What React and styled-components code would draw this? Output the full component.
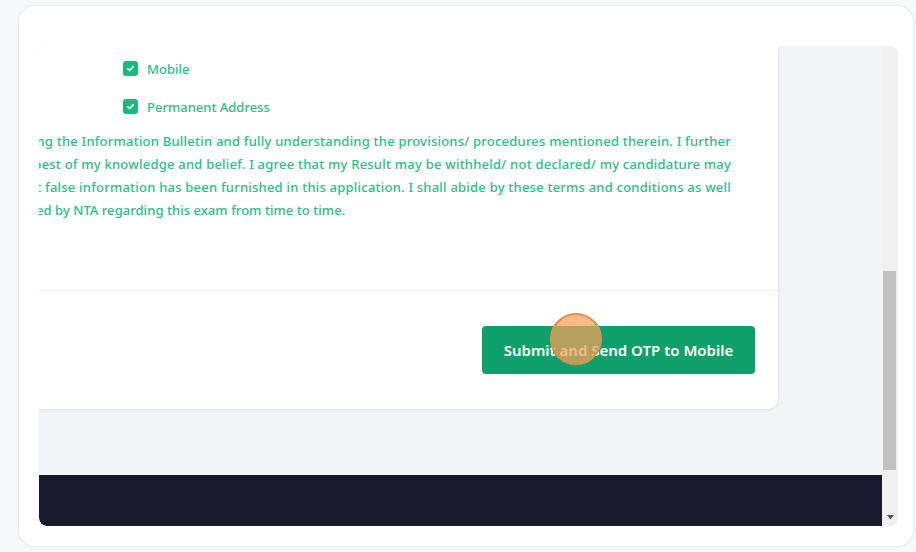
import React from 'react'
import styled, { createGlobalStyle } from 'styled-components'

const GlobalStyle = createGlobalStyle`
  html, body {
    margin: 0;
    padding: 0;
    background: #f7f8fa;
    font-family: "Noto Sans", "Liberation Sans", sans-serif;
  }
`

const lines = [
  'after carefully reading the Information Bulletin and fully understanding the provisions/ procedures mentioned therein. I further',
  'in this application are true to the best of my knowledge and belief. I agree that my Result may be withheld/ not declared/ my candidature may',
  'if it is discovered that false information has been furnished in this application. I shall abide by these terms and conditions as well',
]

const App = () => {
  return (
    <>
      <GlobalStyle />
      <Page>
        <Shell>
          <Frame>
            <Viewport>
              <Scroller>
                <Card>
                  <CardBody>
                    <Checks>
                      <CheckRow>
                        <CheckBox />
                        <span>Mobile</span>
                      </CheckRow>
                      <CheckRow>
                        <CheckBox />
                        <span>Permanent Address</span>
                      </CheckRow>
                    </Checks>
                    <Declaration>
                      {lines.map((l, i) => (
                        <Line key={i}>
                          <span>{l}</span>
                        </Line>
                      ))}
                      <Line $last>
                        <span>ed by NTA regarding this exam from time to time.</span>
                      </Line>
                    </Declaration>
                  </CardBody>
                  <CardFooter>
                    <SubmitButton>
                      Submit and Send OTP to Mobile
                      <Cursor />
                    </SubmitButton>
                  </CardFooter>
                </Card>
              </Scroller>
              <Footer />
            </Viewport>
            <ScrollBar>
              <Thumb />
              <Arrow>
                <svg width="7" height="5" viewBox="0 0 7 5">
                  <path d="M0 0 L7 0 L3.5 4.5 Z" fill="#505050" />
                </svg>
              </Arrow>
            </ScrollBar>
          </Frame>
        </Shell>
      </Page>
    </>
  )
}

const CheckBox = () => (
  <Box>
    <svg width="9" height="9" viewBox="0 0 10 10">
      <path
        d="M2 5.2 L4.1 7.2 L8 3"
        fill="none"
        stroke="#fff"
        strokeWidth="1.8"
        strokeLinecap="round"
        strokeLinejoin="round"
      />
    </svg>
  </Box>
)

export default App

const Page = styled.div`
  width: 916px;
  height: 552px;
  padding: 6px 0 0 19px;
  box-sizing: border-box;
  overflow: hidden;
`

const Shell = styled.div`
  width: 894px;
  height: 540px;
  background: #fff;
  border-radius: 16px;
  box-shadow: 0 0 3px rgba(20, 30, 60, 0.12);
  padding: 40px 0 0 20px;
  box-sizing: border-box;
`

const Frame = styled.div`
  width: 859px;
  height: 480px;
  display: flex;
  border-radius: 8px;
  overflow: hidden;
  background: #f3f4f8;
`

const Viewport = styled.div`
  width: 843px;
  display: flex;
  flex-direction: column;
`

const Scroller = styled.div`
  height: 429px;
  background: #f3f4f8;
  overflow: hidden;
`

const Card = styled.div`
  width: 739px;
  background: #fff;
  border-radius: 0 0 10px 0;
  box-shadow: 0 1px 3px rgba(30, 40, 80, 0.1);
  overflow: hidden;
`

const CardBody = styled.div`
  height: 245px;
  padding-top: 15px;
  box-sizing: border-box;
  border-bottom: 1px solid #eff1f4;
  color: #2ebd85;
  font-size: 13px;
  font-weight: 500;
`

const Checks = styled.div`
  display: flex;
  flex-direction: column;
  gap: 23px;
  padding-left: 84px;
`

const CheckRow = styled.label`
  display: flex;
  align-items: center;
  gap: 9px;
  height: 15px;
`

const Box = styled.span`
  width: 15px;
  height: 15px;
  border-radius: 3px;
  background: #19b97f;
  display: flex;
  align-items: center;
  justify-content: center;
`

const Declaration = styled.div`
  margin-top: 16px;
  padding-right: 47px;
  line-height: 23px;
`

const Line = styled.div`
  display: flex;
  justify-content: ${(p) => (p.$last ? 'flex-start' : 'flex-end')};
  white-space: nowrap;
  letter-spacing: ${(p) => (p.$last ? '0.05px' : '0.22px')};
  margin-left: ${(p) => (p.$last ? '-3px' : '0')};
`

const CardFooter = styled.div`
  display: flex;
  justify-content: flex-end;
  padding: 35px 23px 35px 0;
`

const SubmitButton = styled.button`
  position: relative;
  height: 48px;
  width: 273px;
  border: none;
  border-radius: 4px;
  background: #0ea06a;
  color: #fff;
  font-family: "Noto Sans", "Liberation Sans", sans-serif;
  font-size: 15px;
  font-weight: 600;
  cursor: pointer;
`

const Cursor = styled.span`
  position: absolute;
  left: 68px;
  top: -13px;
  width: 52px;
  height: 52px;
  border-radius: 50%;
  background: rgba(247, 160, 90, 0.72);
  border: 2px solid #e2904a;
  box-sizing: border-box;
`

const Footer = styled.div`
  height: 51px;
  background: #181a2c;
  border-radius: 0 0 0 8px;
`

const ScrollBar = styled.div`
  width: 16px;
  background: #f1f1f1;
  display: flex;
  flex-direction: column;
  padding-top: 225px;
  box-sizing: border-box;
`

const Thumb = styled.div`
  height: 199px;
  margin: 0 2px 0 1px;
  background: #c1c1c1;
`

const Arrow = styled.div`
  flex: 1;
  display: flex;
  align-items: flex-end;
  justify-content: center;
  padding-bottom: 6px;
`
